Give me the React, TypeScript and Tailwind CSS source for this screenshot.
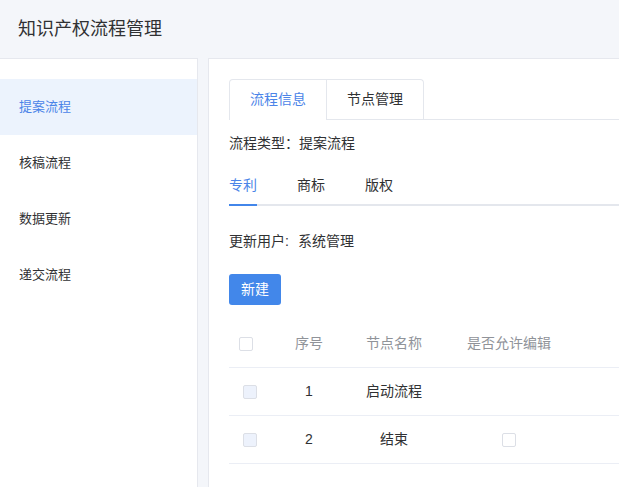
import React from "react";

const font = { fontFamily: '"Liberation Sans", "Noto Sans CJK SC", sans-serif' };

function Check({ disabled = false, className = "" }: { disabled?: boolean; className?: string }) {
  return (
    <span
      className={
        "inline-block w-[14px] h-[14px] rounded-[2px] border border-[#dcdfe6] " +
        (disabled ? "bg-[#edf2fc] " : "bg-white ") +
        className
      }
    />
  );
}

export default function App() {
  const menu = ["提案流程", "核稿流程", "数据更新", "递交流程"];
  const rows = [
    { no: "1", name: "启动流程", edit: false },
    { no: "2", name: "结束", edit: true },
  ];
  return (
    <div style={font} className="w-[619px] h-[487px] overflow-hidden bg-[#f4f6fa] text-[#303133] flex flex-col">
      <div className="h-[58px] shrink-0 flex items-center pl-[18px] text-[18px] text-[#303133]">
        知识产权流程管理
      </div>
      <div className="flex-1 flex gap-[10px] min-h-0">
        <div className="w-[198px] shrink-0 bg-white border border-l-0 border-b-0 border-[#e6e8ee] pt-[20px]">
          {menu.map((m, i) => (
            <div
              key={m}
              className={
                "h-[56px] flex items-center pl-[19px] text-[13px] " +
                (i === 0 ? "bg-[#ecf3fd] text-[#4b84e8]" : "text-[#303133]")
              }
            >
              {m}
            </div>
          ))}
        </div>
        <div className="w-[480px] shrink-0 bg-white border border-b-0 border-[#e6e8ee] pt-[20px] pl-[20px] text-[14px]">
          {/* card tabs */}
          <div className="flex items-start border-b border-[#e4e7ed]">
            <div className="flex border-t border-x border-[#e4e7ed] rounded-t-[4px] mb-[-1px]">
              <div className="h-[40px] px-5 flex items-center border-b border-white text-[#4b84e8]">流程信息</div>
              <div className="h-[40px] px-5 flex items-center border-l border-[#e4e7ed] border-b border-b-transparent text-[#303133]">
                节点管理
              </div>
            </div>
          </div>
          <div className="mt-[13px] h-[20px] leading-[20px]">流程类型：提案流程</div>
          {/* sub tabs */}
          <div className="mt-[13px] flex border-b-2 border-[#e4e7ed]">
            <div className="h-[40px] mb-[-2px] mr-[40px] flex items-center border-b-2 border-[#4286ea] text-[#4b84e8]">专利</div>
            <div className="h-[40px] mb-[-2px] mr-[40px] flex items-center border-b-2 border-transparent">商标</div>
            <div className="h-[40px] mb-[-2px] flex items-center border-b-2 border-transparent">版权</div>
          </div>
          <div className="mt-[15px] h-[40px] flex items-center">
            <span className="w-[69px]">更新用户:</span>
            <span>系统管理</span>
          </div>
          <button className="mt-[13px] h-[31px] w-[52px] rounded-[3px] bg-[#4287ea] text-white text-[14px] flex items-center justify-center">
            新建
          </button>
          {/* table */}
          <div className="mt-[15px]">
            <div className="h-[48px] flex items-center border-b border-[#ebeef5] text-[#909399]">
              <div className="w-[41px] flex items-center">
                <Check className="ml-[10px]" />
              </div>
              <div className="w-[78px] text-center">序号</div>
              <div className="w-[92px] text-center">节点名称</div>
              <div className="w-[138px] text-center">是否允许编辑</div>
            </div>
            {rows.map((r) => (
              <div key={r.no} className="h-[48px] flex items-center border-b border-[#ebeef5] text-[#303133]">
                <div className="w-[41px] flex items-center">
                  <Check disabled className="ml-[14px]" />
                </div>
                <div className="w-[78px] text-center">{r.no}</div>
                <div className="w-[92px] text-center">{r.name}</div>
                <div className="w-[138px] flex justify-center">{r.edit ? <Check /> : null}</div>
              </div>
            ))}
          </div>
        </div>
      </div>
    </div>
  );
}
